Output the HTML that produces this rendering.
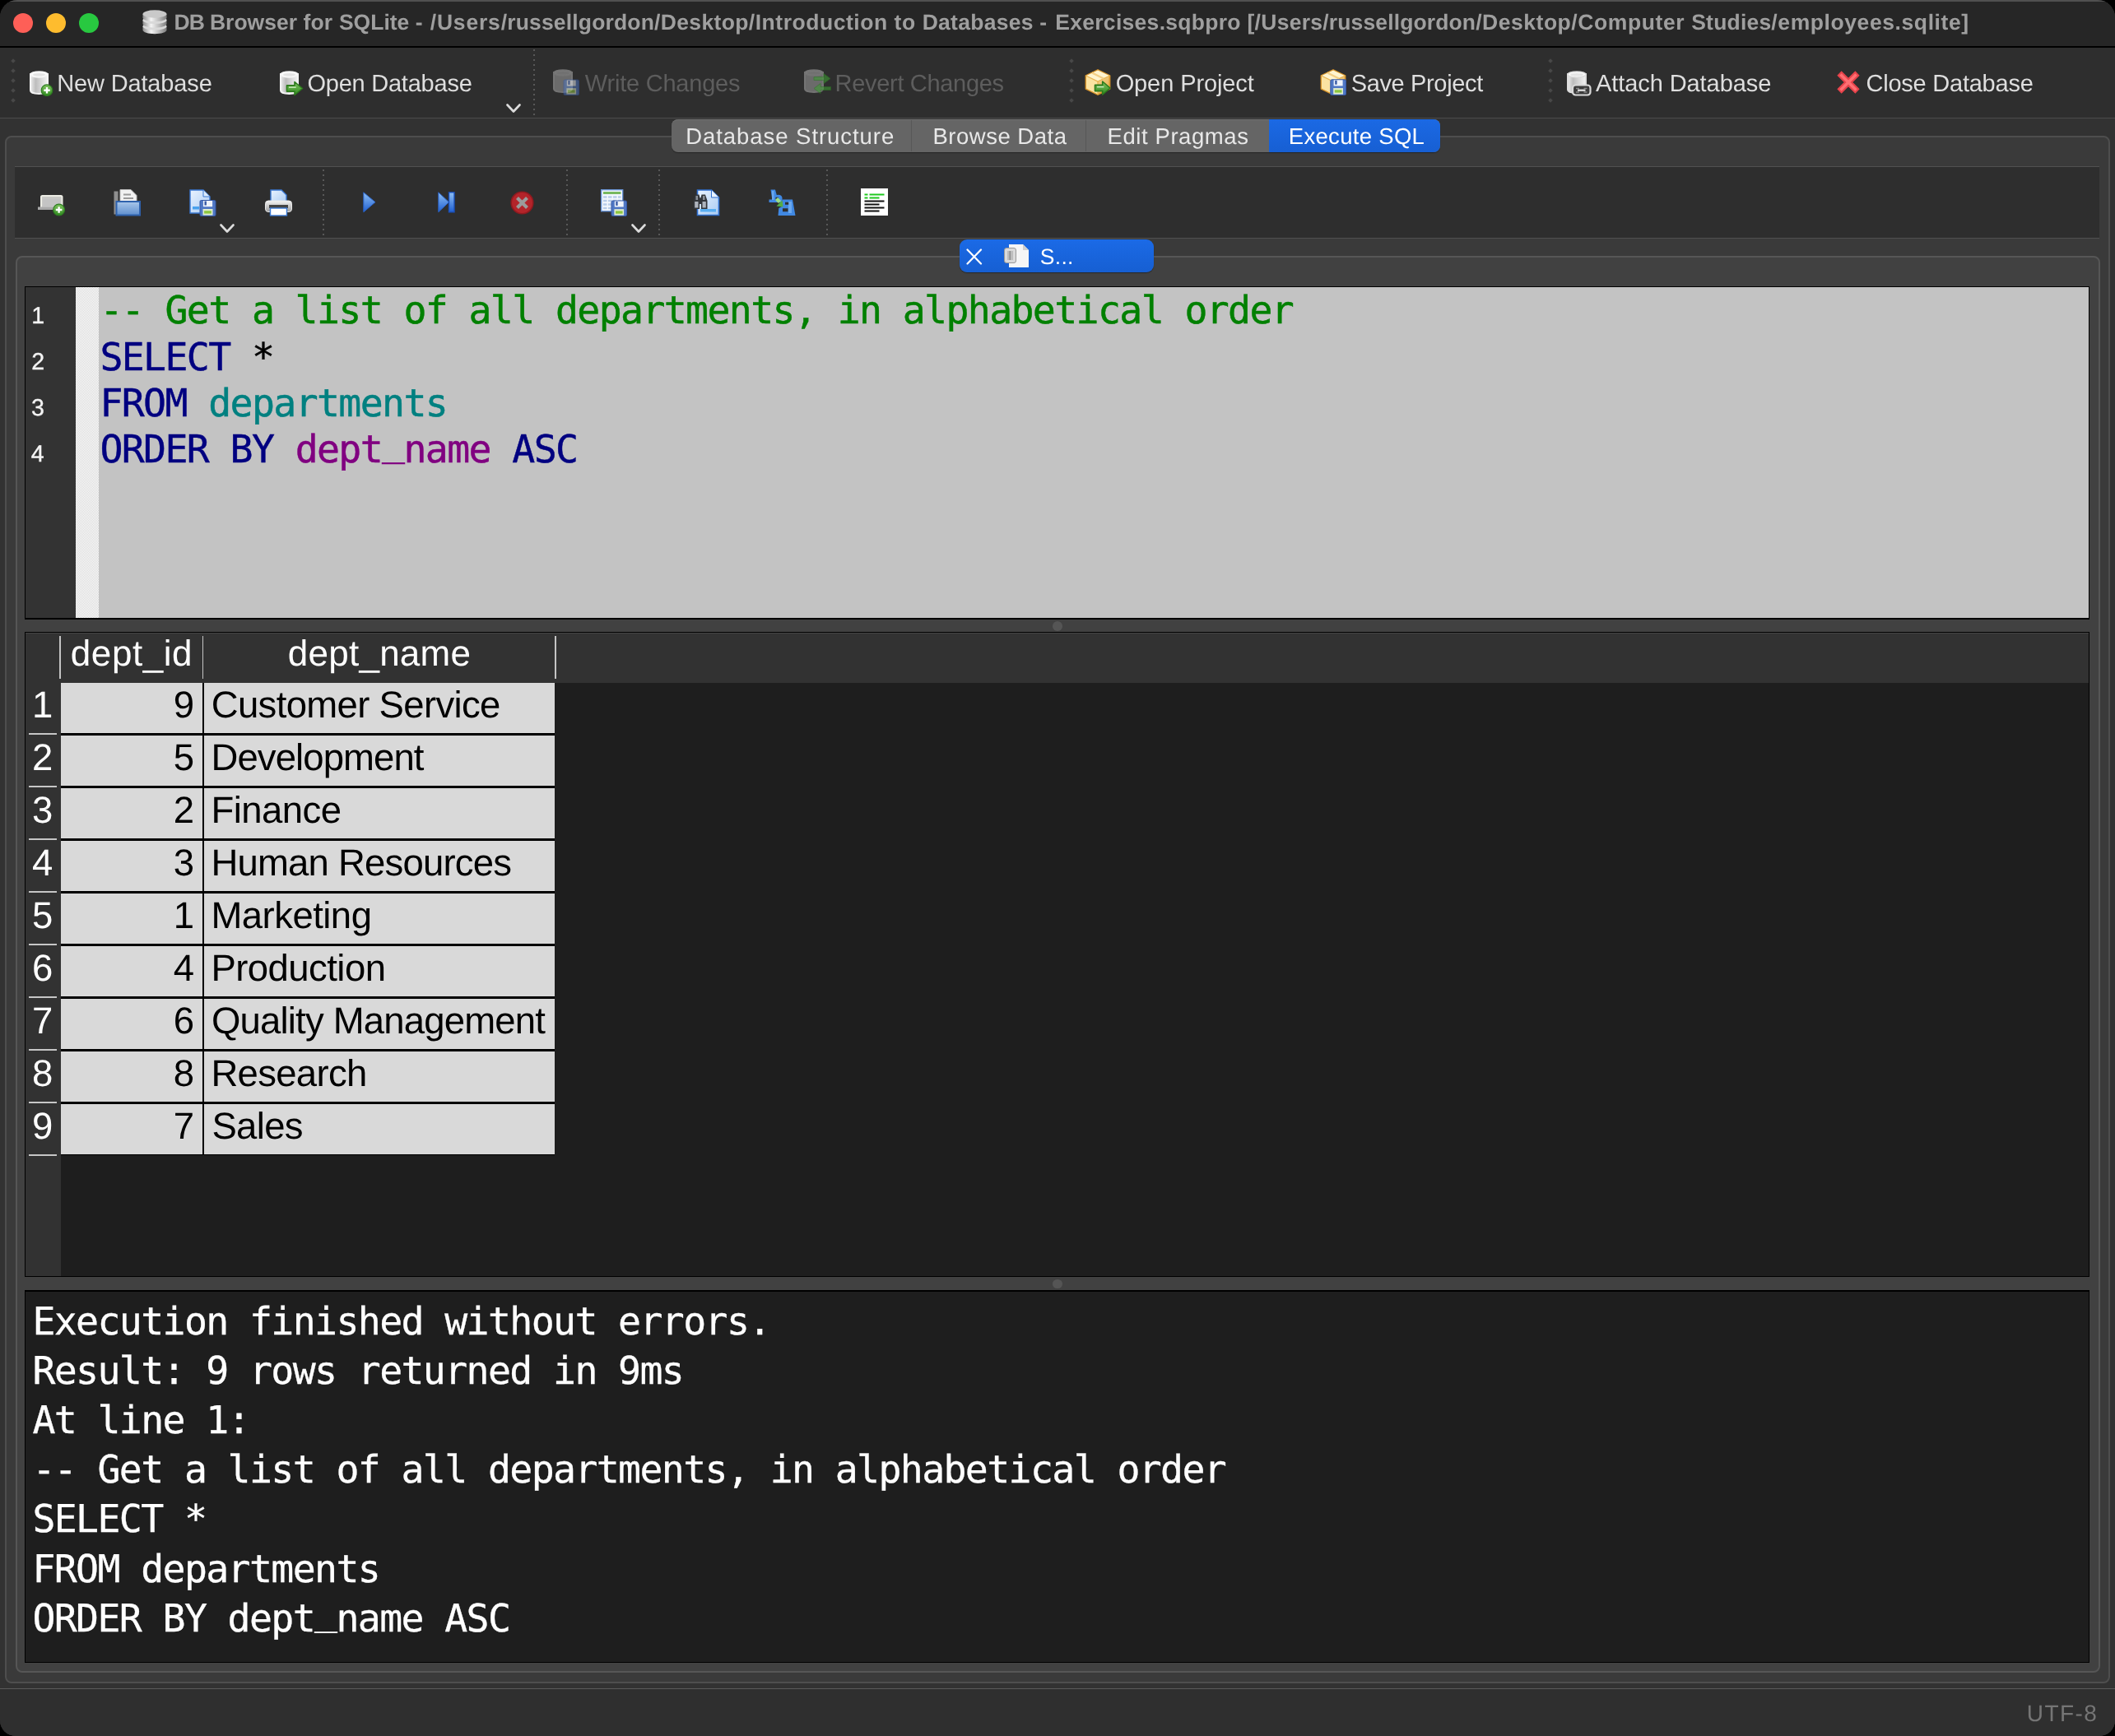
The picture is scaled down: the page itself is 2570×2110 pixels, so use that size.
<!DOCTYPE html>
<html><head><meta charset="utf-8"><title>DB Browser for SQLite</title>
<style>
html,body{margin:0;padding:0;background:#000;}
body{width:2570px;height:2110px;position:relative;overflow:hidden;}
.a{position:absolute;display:block}
.ic{filter:blur(.55px)}
.t{position:absolute;white-space:nowrap;font-kerning:none;margin:0;text-rendering:geometricPrecision}
</style></head><body>
<div class="a" id="win" style="left:0;top:0;width:2570px;height:2110px;background:#323232;border-radius:21px 21px 19px 19px;overflow:hidden;will-change:transform">
<div class="a" style="left:0px;top:0px;width:2570.00px;height:56.50px;background:#262626;"></div>
<div class="a" style="left:0px;top:0px;width:2570.00px;height:1.50px;background:#505050;"></div>
<div class="a" style="left:0px;top:56px;width:2570.00px;height:1.50px;background:#000;"></div>
<div class="a" style="left:15.8px;top:15.8px;width:24.4px;height:24.4px;border-radius:50%;background:#fe5f57"></div>
<div class="a" style="left:55.8px;top:15.8px;width:24.4px;height:24.4px;border-radius:50%;background:#febc2e"></div>
<div class="a" style="left:95.8px;top:15.8px;width:24.4px;height:24.4px;border-radius:50%;background:#28c840"></div>
<svg class="a" style="left:172px;top:11px" width="32" height="31" viewBox="0 0 32 31">
<defs><linearGradient id="sil" x1="0" x2="1"><stop offset="0" stop-color="#8e8e8e"/><stop offset=".35" stop-color="#f4f4f4"/><stop offset=".7" stop-color="#b8b8b8"/><stop offset="1" stop-color="#7c7c7c"/></linearGradient></defs>
<g>
<path d="M1.5 21v4.5c0 2.6 6.5 4.7 14.5 4.7s14.500-2.100 14.500-4.700V21z" fill="url(#sil)"/>
<ellipse cx="16" cy="21" rx="14.500" ry="4.600" fill="#d9d9d9"/>
<path d="M1.5 13.500v4.500c0 2.600 6.500 4.700 14.500 4.700s14.500-2.100 14.500-4.700v-4.500z" fill="url(#sil)"/>
<ellipse cx="16" cy="13.500" rx="14.500" ry="4.600" fill="#d9d9d9"/>
<path d="M1.5 6v4.500c0 2.600 6.500 4.700 14.500 4.700s14.500-2.100 14.500-4.700V6z" fill="url(#sil)"/>
<ellipse cx="16" cy="6" rx="14.500" ry="4.700" fill="#c9c9c9"/>
</g></svg>
<div class="t" style="left:211.43px;top:10.01px;font:26.5px/34px 'Liberation Sans', sans-serif;font-weight:bold;letter-spacing:0.000px;color:#9f9f9f;white-space:pre;"><span style="letter-spacing:-0.712px">DB </span><span style="letter-spacing:0.012px">Browser </span><span style="letter-spacing:0.203px">for </span><span style="letter-spacing:-0.009px">SQLite </span><span style="letter-spacing:0.956px">- </span><span style="letter-spacing:0.812px">/Users</span><span style="letter-spacing:0.168px">/russellgordon</span><span style="letter-spacing:0.348px">/Desktop</span><span style="letter-spacing:0.538px">/Introduction </span><span style="letter-spacing:0.575px">to </span><span style="letter-spacing:0.266px">Databases </span><span style="letter-spacing:1.356px">- </span><span style="letter-spacing:0.294px">Exercises.sqbpro </span><span style="letter-spacing:0.278px">[/Users</span><span style="letter-spacing:0.125px">/russellgordon</span><span style="letter-spacing:0.536px">/Desktop</span><span style="letter-spacing:0.604px">/Computer </span><span style="letter-spacing:0.198px">Studies</span><span style="letter-spacing:0.588px">/employees.sqlite]</span></div>
<div class="a" style="left:0px;top:57.5px;width:2570.00px;height:85.70px;background:#2e2e2e;"></div>
<div class="a" style="left:0px;top:143px;width:2570.00px;height:1.30px;background:#4c4c4c;"></div>
<div class="a" style="left:14px;top:72px;width:4px;height:4px;background:#484848;transform:rotate(45deg)"></div>
<div class="a" style="left:14px;top:84px;width:4px;height:4px;background:#484848;transform:rotate(45deg)"></div>
<div class="a" style="left:14px;top:96px;width:4px;height:4px;background:#484848;transform:rotate(45deg)"></div>
<div class="a" style="left:14px;top:108px;width:4px;height:4px;background:#484848;transform:rotate(45deg)"></div>
<div class="a" style="left:14px;top:120px;width:4px;height:4px;background:#484848;transform:rotate(45deg)"></div>
<div class="a" style="left:1300px;top:72px;width:4px;height:4px;background:#484848;transform:rotate(45deg)"></div>
<div class="a" style="left:1300px;top:84px;width:4px;height:4px;background:#484848;transform:rotate(45deg)"></div>
<div class="a" style="left:1300px;top:96px;width:4px;height:4px;background:#484848;transform:rotate(45deg)"></div>
<div class="a" style="left:1300px;top:108px;width:4px;height:4px;background:#484848;transform:rotate(45deg)"></div>
<div class="a" style="left:1300px;top:120px;width:4px;height:4px;background:#484848;transform:rotate(45deg)"></div>
<div class="a" style="left:1882px;top:72px;width:4px;height:4px;background:#484848;transform:rotate(45deg)"></div>
<div class="a" style="left:1882px;top:84px;width:4px;height:4px;background:#484848;transform:rotate(45deg)"></div>
<div class="a" style="left:1882px;top:96px;width:4px;height:4px;background:#484848;transform:rotate(45deg)"></div>
<div class="a" style="left:1882px;top:108px;width:4px;height:4px;background:#484848;transform:rotate(45deg)"></div>
<div class="a" style="left:1882px;top:120px;width:4px;height:4px;background:#484848;transform:rotate(45deg)"></div>
<div class="a" style="left:648px;top:60px;width:2px;height:80px;background:repeating-linear-gradient(to bottom,#585858 0 2px,transparent 2px 6px)"></div>
<div class="t" style="left:69.22px;top:83.05px;font:29px/38px 'Liberation Sans', sans-serif;letter-spacing:-0.150px;color:#dedede;white-space:nowrap;">New Database</div>
<div class="t" style="left:373.43px;top:83.05px;font:29px/38px 'Liberation Sans', sans-serif;letter-spacing:-0.232px;color:#dedede;white-space:nowrap;">Open Database</div>
<div class="t" style="left:710.87px;top:83.05px;font:29px/38px 'Liberation Sans', sans-serif;letter-spacing:-0.219px;color:#5d5d5d;white-space:nowrap;">Write Changes</div>
<div class="t" style="left:1014.62px;top:83.05px;font:29px/38px 'Liberation Sans', sans-serif;letter-spacing:-0.318px;color:#5d5d5d;white-space:nowrap;">Revert Changes</div>
<div class="t" style="left:1355.63px;top:83.05px;font:29px/38px 'Liberation Sans', sans-serif;letter-spacing:-0.097px;color:#dedede;white-space:nowrap;">Open Project</div>
<div class="t" style="left:1641.68px;top:83.05px;font:29px/38px 'Liberation Sans', sans-serif;letter-spacing:-0.353px;color:#dedede;white-space:nowrap;">Save Project</div>
<div class="t" style="left:1938.94px;top:83.05px;font:29px/38px 'Liberation Sans', sans-serif;letter-spacing:-0.076px;color:#dedede;white-space:nowrap;">Attach Database</div>
<div class="t" style="left:2267.53px;top:83.05px;font:29px/38px 'Liberation Sans', sans-serif;letter-spacing:-0.237px;color:#dedede;white-space:nowrap;">Close Database</div>
<svg class="a" width="0" height="0" style="left:0;top:0"><defs>
<linearGradient id="cyl" x1="0" x2="1"><stop offset="0" stop-color="#ececec"/><stop offset=".3" stop-color="#bdbdbd"/><stop offset=".6" stop-color="#d6d6d6"/><stop offset="1" stop-color="#f4f4f4"/></linearGradient>
<linearGradient id="cyld" x1="0" x2="1"><stop offset="0" stop-color="#5c5c5c"/><stop offset=".4" stop-color="#7b7b7b"/><stop offset="1" stop-color="#565656"/></linearGradient>
<linearGradient id="grn" x1="0" y1="0" x2="0" y2="1"><stop offset="0" stop-color="#7fc35f"/><stop offset="1" stop-color="#2f8a1f"/></linearGradient>
<linearGradient id="blu" x1="0" y1="0" x2="0" y2="1"><stop offset="0" stop-color="#8fc0f5"/><stop offset="1" stop-color="#1f5fd0"/></linearGradient>
<linearGradient id="page" x1="0" y1="0" x2="1" y2="1"><stop offset="0" stop-color="#eaf3ff"/><stop offset="1" stop-color="#a9cbf3"/></linearGradient>
<linearGradient id="box" x1="0" y1="0" x2="1" y2="1"><stop offset="0" stop-color="#fff3c4"/><stop offset="1" stop-color="#e2a640"/></linearGradient>
<linearGradient id="fold" x1="0" y1="0" x2="0" y2="1"><stop offset="0" stop-color="#a9c7ea"/><stop offset="1" stop-color="#5f8fce"/></linearGradient>
<linearGradient id="gray" x1="0" y1="0" x2="0" y2="1"><stop offset="0" stop-color="#f4f4f4"/><stop offset="1" stop-color="#9d9d9d"/></linearGradient>
</defs></svg>
<svg class="a ic" style="left:36px;top:85.5px;" width="29" height="31" viewBox="0 0 29 31"><g opacity="1"><path d="M1 4v20c0 5.2 21 5.2 21 0v-20z" fill="url(#cyl)" stroke="#f4f4f4" stroke-width="2"/><ellipse cx="11.5" cy="4.5" rx="10.5" ry="3.5" fill="#fbfbfb" stroke="#f4f4f4" stroke-width="1.500"/><ellipse cx="11.5" cy="4.8" rx="7.5" ry="1.7999999999999998" fill="#d2d2d2" opacity=".55"/></g><circle cx="21" cy="23.7" r="6.8" fill="url(#grn)" stroke="#2f7d22" stroke-width="1.200"/><path d="M17.3 23.7H24.7M21 20.0V27.4" stroke="#fff" stroke-width="2.400"/></svg>
<svg class="a ic" style="left:340px;top:85.5px;" width="29" height="31" viewBox="0 0 29 31"><g opacity="1"><path d="M1 4v20c0 5.2 21 5.2 21 0v-20z" fill="url(#cyl)" stroke="#f4f4f4" stroke-width="2"/><ellipse cx="11.5" cy="4.5" rx="10.5" ry="3.5" fill="#fbfbfb" stroke="#f4f4f4" stroke-width="1.500"/><ellipse cx="11.5" cy="4.8" rx="7.5" ry="1.7999999999999998" fill="#d2d2d2" opacity=".55"/></g><g transform="translate(7.5,12.5)" opacity="1"><path d="M1 5.4H10.5V1L20 9.0 10.5 17V12.6H1z" fill="url(#grn)" stroke="#2c7a1c" stroke-width="1.6" stroke-linejoin="round"/><path d="M3.500 7.6H12.2" stroke="#c5e8b4" stroke-width="1.600"/></g></svg>
<svg class="a ic" style="left:672px;top:83.5px;" width="32.5" height="33" viewBox="0 0 32.5 33"><g opacity="1"><path d="M1 4v20c0 5.2 22 5.2 22 0v-20z" fill="#6b6b6b" stroke="#747474" stroke-width="2"/><ellipse cx="12.0" cy="4.5" rx="11.0" ry="3.5" fill="#787878" stroke="#747474" stroke-width="1.500"/><ellipse cx="12.0" cy="4.8" rx="8.0" ry="1.7999999999999998" fill="#6b6b6b" opacity=".55"/></g><g transform="translate(12.5,12.5)" opacity="0.5"><rect x=".5" y=".5" width="18.5" height="18.5" rx="1.500" fill="#4f77c4" stroke="#3558a5"/><rect x="4.3" y="1" width="10.9" height="7.0" fill="#eef3fb"/><rect x="5.8" y="1.500" width="2.3" height="4.9" fill="#3558a5"/><rect x="3.9" y="10.7" width="11.7" height="7.4" fill="#dfeccd"/><rect x="5.5" y="12.9" width="8.6" height="3.3" fill="#8cc63f"/></g></svg>
<svg class="a ic" style="left:977px;top:83.5px;" width="34" height="33" viewBox="0 0 34 33"><g opacity="1"><path d="M1 4v20c0 5.2 22 5.2 22 0v-20z" fill="#6b6b6b" stroke="#747474" stroke-width="2"/><ellipse cx="12.0" cy="4.5" rx="11.0" ry="3.5" fill="#787878" stroke="#747474" stroke-width="1.500"/><ellipse cx="12.0" cy="4.8" rx="8.0" ry="1.7999999999999998" fill="#6b6b6b" opacity=".55"/></g><g opacity=".6" fill="#3f9a35" stroke="#2d7a25" stroke-width="1"><path d="M12 9.500h12V5.500l8 6-8 6V13.500H12z"/><path d="M32.500 21.500H20v-4l-8 6 8 6V25.500h12.500z"/></g></svg>
<svg class="a ic" style="left:1318px;top:83.8px;" width="33" height="33" viewBox="0 0 33 33"><g opacity="1"><path d="M16 1 30.500 8V24L16 31 1.500 24V8z" fill="url(#box)" stroke="#d9962c" stroke-width="1.800" stroke-linejoin="round"/><path d="M16 1.500 30 8 16 15 2 8z" fill="#fff4cf"/><path d="M2 8.500 16 15.500V30.500L2 23.500z" fill="#fbe3a2"/><path d="M1.500 8 16 15 30.500 8M16 15V31" fill="none" stroke="#e9b552" stroke-width="1.300"/><path d="M9 4.500 23 11.500" stroke="#f3cf86" stroke-width="2.500"/></g><g transform="translate(11.5,14)" opacity="1"><path d="M1 5.4H10.2V1L19.5 9.0 10.2 17V12.6H1z" fill="url(#grn)" stroke="#2c7a1c" stroke-width="1.6" stroke-linejoin="round"/><path d="M3.500 7.6H11.9" stroke="#c5e8b4" stroke-width="1.600"/></g></svg>
<svg class="a ic" style="left:1604px;top:83.8px;" width="33" height="33" viewBox="0 0 33 33"><g opacity="1"><path d="M16 1 30.500 8V24L16 31 1.500 24V8z" fill="url(#box)" stroke="#d9962c" stroke-width="1.800" stroke-linejoin="round"/><path d="M16 1.500 30 8 16 15 2 8z" fill="#fff4cf"/><path d="M2 8.500 16 15.500V30.500L2 23.500z" fill="#fbe3a2"/><path d="M1.500 8 16 15 30.500 8M16 15V31" fill="none" stroke="#e9b552" stroke-width="1.300"/><path d="M9 4.500 23 11.500" stroke="#f3cf86" stroke-width="2.500"/></g><g transform="translate(12.3,12.3)" opacity="1"><rect x=".5" y=".5" width="18.7" height="18.7" rx="1.500" fill="#4f77c4" stroke="#3558a5"/><rect x="4.3" y="1" width="11.0" height="7.1" fill="#eef3fb"/><rect x="5.9" y="1.500" width="2.4" height="4.9" fill="#3558a5"/><rect x="3.9" y="10.8" width="11.8" height="7.5" fill="#dfeccd"/><rect x="5.5" y="13.0" width="8.7" height="3.3" fill="#8cc63f"/></g></svg>
<svg class="a ic" style="left:1903.5px;top:85.5px;" width="30" height="31" viewBox="0 0 30 31"><g opacity="1"><path d="M1 4v19c0 5.2 22 5.2 22 0v-19z" fill="url(#cyl)" stroke="#dcdcdc" stroke-width="2"/><ellipse cx="12.0" cy="4.5" rx="11.0" ry="3.5" fill="#fbfbfb" stroke="#dcdcdc" stroke-width="1.500"/><ellipse cx="12.0" cy="4.8" rx="8.0" ry="1.7999999999999998" fill="#d2d2d2" opacity=".55"/></g><rect x="7" y="17.500" width="21.500" height="12" rx="3.500" fill="#3b3b3b" stroke="#d8d8d8" stroke-width="2.200"/><path d="M11 21.500h4M20.500 21.500h4M11 26h4M20.500 26h4" stroke="#8a8a8a" stroke-width="1.500"/><path d="M13 23.700h9.500" stroke="#e4e4e4" stroke-width="2.200"/></svg>
<svg class="a ic" style="left:2232px;top:86px;" width="28" height="28" viewBox="0 0 28 28"><path d="M3 3 25 25M25 3 3 25" stroke="#e8434b" stroke-width="7.500" stroke-linecap="butt"/><path d="M4.500 4.500 23.500 23.500M23.500 4.500 4.500 23.500" stroke="#ff6f73" stroke-width="3.500" stroke-linecap="butt"/></svg>
<svg class="a" style="left:615px;top:126px" width="18" height="12" viewBox="0 0 18 12"><path d="M1.5 1.500 9 9.500 16.500 1.500" fill="none" stroke="#dcdcdc" stroke-width="2.6" stroke-linecap="round" stroke-linejoin="round"/></svg>
<div class="a" style="left:6px;top:164.5px;width:2557.5px;height:1881.5px;background:#3a3a3a;border:2px solid #4e4e4e;border-radius:8px;box-sizing:border-box"></div>
<div class="a" style="left:815.5px;top:144.5px;width:934.5px;height:40.3px;background:#656565;border-radius:8px;box-shadow:inset 0 1px 0 #707070, 0 1px 1px rgba(0,0,0,.35)"></div>
<div class="a" style="left:1542px;top:144.5px;width:208px;height:40.3px;background:linear-gradient(#1b69e4,#175fd3);border-radius:0 8px 8px 0"></div>
<div class="a" style="left:1107.2px;top:146px;width:1.30px;height:38.00px;background:#575757;"></div>
<div class="a" style="left:1319.2px;top:146px;width:1.30px;height:38.00px;background:#575757;"></div>
<div class="t" style="left:833.24px;top:148.37px;font:27.5px/36px 'Liberation Sans', sans-serif;letter-spacing:0.944px;color:#e8e8e8;white-space:nowrap;">Database Structure</div>
<div class="t" style="left:1133.44px;top:148.37px;font:27.5px/36px 'Liberation Sans', sans-serif;letter-spacing:0.513px;color:#e8e8e8;white-space:nowrap;">Browse Data</div>
<div class="t" style="left:1345.54px;top:148.37px;font:27.5px/36px 'Liberation Sans', sans-serif;letter-spacing:0.580px;color:#e8e8e8;white-space:nowrap;">Edit Pragmas</div>
<div class="t" style="left:1565.74px;top:148.37px;font:27.5px/36px 'Liberation Sans', sans-serif;letter-spacing:0.314px;color:#ffffff;white-space:nowrap;">Execute SQL</div>
<div class="a" style="left:18px;top:202px;width:2533.00px;height:87.80px;background:#2e2e2e;"></div>
<div class="a" style="left:18px;top:202px;width:2533.00px;height:1.30px;background:#505050;"></div>
<div class="a" style="left:18px;top:288.7px;width:2533.00px;height:1.30px;background:#505050;"></div>
<div class="a" style="left:392px;top:206px;width:2px;height:80px;background:repeating-linear-gradient(to bottom,#585858 0 2px,transparent 2px 6px)"></div>
<div class="a" style="left:688px;top:206px;width:2px;height:80px;background:repeating-linear-gradient(to bottom,#585858 0 2px,transparent 2px 6px)"></div>
<div class="a" style="left:800px;top:206px;width:2px;height:80px;background:repeating-linear-gradient(to bottom,#585858 0 2px,transparent 2px 6px)"></div>
<div class="a" style="left:1004px;top:206px;width:2px;height:80px;background:repeating-linear-gradient(to bottom,#585858 0 2px,transparent 2px 6px)"></div>
<svg class="a" style="left:267px;top:272px" width="18" height="12" viewBox="0 0 18 12"><path d="M1.5 1.500 9 9.500 16.500 1.500" fill="none" stroke="#dcdcdc" stroke-width="2.6" stroke-linecap="round" stroke-linejoin="round"/></svg>
<svg class="a" style="left:767px;top:272px" width="18" height="12" viewBox="0 0 18 12"><path d="M1.5 1.500 9 9.500 16.500 1.500" fill="none" stroke="#dcdcdc" stroke-width="2.6" stroke-linecap="round" stroke-linejoin="round"/></svg>
<svg class="a ic" style="left:45.5px;top:237px;" width="33" height="26" viewBox="0 0 33 26"><path d="M0.500 16.500H4V2.500q0-1.500 1.500-1.500H28q1.500 0 1.500 1.500V16.500" fill="#c9c9c6" stroke="#ecece4" stroke-width="2"/><rect x="0" y="14.500" width="27" height="3.500" fill="#a9a9a9"/><rect x="6" y="4.500" width="21" height="10" fill="#c4c4c4"/><circle cx="25.6" cy="18" r="6.9" fill="url(#grn)" stroke="#2f7d22" stroke-width="1.200"/><path d="M21.8 18H29.4M25.6 14.2V21.8" stroke="#fff" stroke-width="2.400"/></svg>
<svg class="a ic" style="left:138px;top:229.5px;" width="33" height="33" viewBox="0 0 33 33"><rect x="0.500" y="2.500" width="5" height="28" fill="#8f8f8f"/><path d="M8 .5h13l7 7v16H8z" fill="#f1f1f1" stroke="#bdbdbd"/><path d="M12 6.500h9M12 11h12" stroke="#9a9a9a" stroke-width="2"/><rect x="3.500" y="15" width="28.500" height="16.500" fill="url(#fold)" stroke="#2f62ad" stroke-width="2"/></svg>
<svg class="a ic" style="left:230px;top:229.5px;" width="33" height="33" viewBox="0 0 33 33"><path d="M1 1h16l8 8v20H1z" fill="url(#page)" stroke="#3a78d2" stroke-width="1.400"/><path d="M17 1v8h8" fill="#dcebfb" stroke="#3a78d2" stroke-width="1"/><rect x="4" y="21" width="8" height="3.500" fill="#49a2ee"/><g transform="translate(12.5,13)" opacity="1"><rect x=".5" y=".5" width="19" height="19" rx="1.500" fill="#4f77c4" stroke="#3558a5"/><rect x="4.4" y="1" width="11.2" height="7.2" fill="#eef3fb"/><rect x="6.0" y="1.500" width="2.4" height="5.0" fill="#3558a5"/><rect x="4.0" y="11.0" width="12.0" height="7.6" fill="#dfeccd"/><rect x="5.6" y="13.2" width="8.8" height="3.4" fill="#8cc63f"/></g></svg>
<svg class="a ic" style="left:321.5px;top:229.5px;" width="33" height="33" viewBox="0 0 33 33"><path d="M7 1h13l6 6v10H7z" fill="url(#page)" stroke="#3a78d2" stroke-width="1.400"/><rect x=".5" y="14" width="32" height="13.500" rx="3.500" fill="url(#gray)" stroke="#e9e9e9"/><rect x="5" y="19" width="23" height="4" fill="#444"/><rect x="6.500" y="23" width="20" height="9" fill="#fff" stroke="#3a78d2" stroke-width="1.400"/></svg>
<svg class="a ic" style="left:441px;top:233px;" width="16" height="26" viewBox="0 0 16 26"><path d="M.8 .8 15 12.700.8 24.700z" fill="url(#blu)" stroke="#2a63c9" stroke-width="1"/></svg>
<svg class="a ic" style="left:531.5px;top:233px;" width="21" height="26" viewBox="0 0 21 26"><path d="M.8 .8 13.500 12.700.8 24.700z" fill="url(#blu)" stroke="#2a63c9" stroke-width="1"/><rect x="13.500" y=".8" width="6.500" height="24" fill="url(#blu)" stroke="#1b50bb" stroke-width="1.400"/></svg>
<svg class="a ic" style="left:619.5px;top:231.5px;" width="29" height="29" viewBox="0 0 29 29"><circle cx="14.500" cy="14.500" r="13.300" fill="#b3242a" stroke="#8f1a1f" stroke-width="1.600"/><path d="M8.500 8.500 20.500 20.500M20.500 8.500 8.500 20.500" stroke="#9b9b9b" stroke-width="4.200"/></svg>
<svg class="a ic" style="left:730px;top:229.5px;" width="33" height="33" viewBox="0 0 33 33"><rect x=".7" y=".7" width="26" height="26" fill="#f3f7fd" stroke="#6a95d6" stroke-width="1.400"/><rect x="3" y="3" width="21.500" height="3" fill="#78b860"/><path d="M3 9.500h21.500M3 14h21.500M3 18.500h21.500M3 23h21.500" stroke="#b9cdea" stroke-width="2.500" stroke-dasharray="4.500 1.500"/><g transform="translate(12.5,13.5)" opacity="1"><rect x=".5" y=".5" width="18.5" height="18.5" rx="1.500" fill="#4f77c4" stroke="#3558a5"/><rect x="4.3" y="1" width="10.9" height="7.0" fill="#eef3fb"/><rect x="5.8" y="1.500" width="2.3" height="4.9" fill="#3558a5"/><rect x="3.9" y="10.7" width="11.7" height="7.4" fill="#dfeccd"/><rect x="5.5" y="12.9" width="8.6" height="3.3" fill="#8cc63f"/></g></svg>
<svg class="a ic" style="left:842px;top:229.5px;" width="33" height="33" viewBox="0 0 33 33"><path d="M5.500 1h17l9 9v21.500H5.500z" fill="url(#page)" stroke="#2f6fd0" stroke-width="1.600"/><path d="M22.500 1v9h9" fill="#eaf3ff" stroke="#2f6fd0" stroke-width="1"/><rect x="9" y="24" width="19" height="3.500" fill="#58aef3"/><g fill="#33363b"><path d="M0.500 14l2.500-7.500h4.500l1 4h1l1-4h4.500l2.500 7.500v10H10V18H8v6H0.500z"/></g><g fill="#aeb4bd"><rect x="2.200" y="15" width="4.300" height="7.500"/><rect x="11.500" y="15" width="4.300" height="7.500"/><rect x="3.500" y="8" width="2.500" height="5" opacity=".7"/><rect x="12" y="8" width="2.500" height="5" opacity=".7"/></g></svg>
<svg class="a ic" style="left:934px;top:229.5px;" width="33" height="33" viewBox="0 0 33 33"><g fill="#4088e2" fill-rule="evenodd"><path d="M2.500 0.500h5.500l1.800 6.500q6-1 6.700 3.500v5.500H0.500v-3.500h3.800zM8.500 9.800v3.400h3.500v-3.400z"/><path d="M16.500 12.500h12.500l3.500 19.500h-21l.8-9 3.700-2zM20 15.800v3h5v-3zM17 23.300v4h6.500v-4z"/></g><g fill="#7db6f4" opacity=".7"><rect x="4" y="2" width="2.500" height="11"/><rect x="24" y="15" width="4" height="14"/></g><path d="M9.500 11.500 13.500 15.500" stroke="#9cdc88" stroke-width="4.500"/><path d="M9.500 20.500 17.500 21.500 16.500 13.500z" fill="#55ad44"/></svg>
<svg class="a ic" style="left:1045.5px;top:229.3px;filter:none;" width="33" height="33" viewBox="0 0 33 33"><rect width="33" height="33" fill="#fff"/><path d="M4.500 7.500h4M10.500 7.500h18M4.500 11.500h4M10.500 11.500h12" stroke="#1ec81e" stroke-width="1.800"/><path d="M4.500 15.500h24M4.500 19.500h18M4.500 23.500h24M4.500 27.500h18" stroke="#111" stroke-width="1.800"/></svg>
<div class="a" style="left:18.5px;top:310.7px;width:2533px;height:1722.5px;background:#414141;border:2px solid #565656;border-radius:8px;box-sizing:border-box"></div>
<div class="a" style="left:1165.8px;top:291px;width:236.2px;height:40px;background:linear-gradient(#1b6ae6,#165fd2);border-radius:9px;box-shadow:0 1px 1px rgba(0,0,0,.4)"></div>
<svg class="a" style="left:1174px;top:302px" width="20" height="20" viewBox="0 0 20 20"><path d="M1.500 1.500 18 18.500M18 1.500 1.500 18.500" stroke="#fff" stroke-width="2.2" fill="none" stroke-linecap="round"/></svg>
<svg class="a" style="left:1220px;top:295.500px" width="31" height="30" viewBox="0 0 31 30">
<path d="M6 1h17l7 7v21H6z" fill="#f6f6f6"/><path d="M23 1v7h7z" fill="#cfcfcf"/>
<rect x="0.500" y="5.500" width="14" height="18" rx="2.500" fill="#dadada" stroke="#9a9a9a"/>
<rect x="4" y="9" width="7" height="11" fill="#bdbdbd"/><rect x="6.500" y="9" width="1.500" height="11" fill="#8d8d8d"/></svg>
<div class="t" style="left:1263.80px;top:295.41px;font:26.5px/34px 'Liberation Sans', sans-serif;letter-spacing:0.287px;color:#fff;white-space:nowrap;">S...</div>
<div class="a" style="left:30px;top:348px;width:2509.00px;height:404.80px;background:#000;"></div>
<div class="a" style="left:31.3px;top:349.3px;width:2506.40px;height:402.20px;background:#c3c3c3;"></div>
<div class="a" style="left:31.3px;top:349.3px;width:60.70px;height:402.20px;background:#333333;"></div>
<div class="a" style="left:92px;top:349.300px;width:28px;height:402.200px;background:repeating-conic-gradient(#ffffff 0 25%,#d6d6d6 0 50%) 0 0/2px 2px"></div>
<div class="t" style="left:38.19px;top:366.18px;font:28.6px/37px 'Liberation Sans', sans-serif;letter-spacing:0.000px;color:#f4f4f4;-webkit-text-stroke:.35px;">1</div>
<div class="t" style="left:38.23px;top:422.28px;font:28.6px/37px 'Liberation Sans', sans-serif;letter-spacing:0.000px;color:#f4f4f4;-webkit-text-stroke:.35px;">2</div>
<div class="t" style="left:38.05px;top:478.38px;font:28.6px/37px 'Liberation Sans', sans-serif;letter-spacing:0.000px;color:#f4f4f4;-webkit-text-stroke:.35px;">3</div>
<div class="t" style="left:37.63px;top:534.48px;font:28.6px/37px 'Liberation Sans', sans-serif;letter-spacing:0.000px;color:#f4f4f4;-webkit-text-stroke:.35px;">4</div>
<div class="t" style="left:121.38px;top:347.40px;font:46.5px/60px 'DejaVu Sans Mono', 'Liberation Mono', monospace;letter-spacing:-1.635px;color:#000;white-space:pre;-webkit-text-stroke:.45px;"><span style="color:#008000">-- Get a list of all departments, in alphabetical order</span></div>
<div class="t" style="left:121.38px;top:403.50px;font:46.5px/60px 'DejaVu Sans Mono', 'Liberation Mono', monospace;letter-spacing:-1.635px;color:#000;white-space:pre;-webkit-text-stroke:.45px;"><span style="color:#000080">SELECT</span> <span style="color:#000">*</span></div>
<div class="t" style="left:121.38px;top:459.60px;font:46.5px/60px 'DejaVu Sans Mono', 'Liberation Mono', monospace;letter-spacing:-1.635px;color:#000;white-space:pre;-webkit-text-stroke:.45px;"><span style="color:#000080">FROM</span> <span style="color:#008080">departments</span></div>
<div class="t" style="left:121.38px;top:515.70px;font:46.5px/60px 'DejaVu Sans Mono', 'Liberation Mono', monospace;letter-spacing:-1.635px;color:#000;white-space:pre;-webkit-text-stroke:.45px;"><span style="color:#000080">ORDER BY</span> <span style="color:#800080">dept<span style="position:relative;top:-9px">_</span>name</span> <span style="color:#000080">ASC</span></div>
<div class="a" style="left:1279.100px;top:755.100px;width:11.800px;height:11.800px;border-radius:50%;background:#555"></div>
<div class="a" style="left:30px;top:767.8px;width:2509.00px;height:784.50px;background:#000;"></div>
<div class="a" style="left:31.3px;top:769px;width:2506.40px;height:782.00px;background:#1e1e1e;"></div>
<div class="a" style="left:31.3px;top:769px;width:2506.40px;height:60.70px;background:#323232;"></div>
<div class="a" style="left:31.3px;top:769px;width:2506.40px;height:1.00px;background:#444;"></div>
<div class="a" style="left:31.3px;top:829.7px;width:42.50px;height:721.30px;background:#323232;"></div>
<div class="a" style="left:72.2px;top:773px;width:1.60px;height:52.00px;background:#c4c4c4;"></div>
<div class="a" style="left:245.79999999999998px;top:773px;width:1.60px;height:52.00px;background:#c4c4c4;"></div>
<div class="a" style="left:674.2px;top:773px;width:1.60px;height:52.00px;background:#c4c4c4;"></div>
<div class="t" style="left:85.85px;top:766.25px;font:44px/57px 'Liberation Sans', sans-serif;letter-spacing:0.555px;color:#fff;white-space:nowrap;">dept_id</div>
<div class="t" style="left:349.85px;top:766.25px;font:44px/57px 'Liberation Sans', sans-serif;letter-spacing:0.241px;color:#fff;white-space:nowrap;">dept_name</div>
<div class="a" style="left:73.8px;top:829.7px;width:600.20px;height:576.00px;background:#000;"></div>
<div class="a" style="left:73.8px;top:829.7px;width:172.10px;height:61.80px;background:#d9d9d9;"></div>
<div class="a" style="left:248px;top:829.7px;width:426.00px;height:61.80px;background:#d9d9d9;"></div>
<div class="a" style="left:34.8px;top:891.1px;width:34.00px;height:1.80px;background:#c6c6c6;"></div>
<div class="t" style="left:38.95px;top:827.03px;font:45.5px/59px 'Liberation Sans', sans-serif;letter-spacing:0.000px;color:#fff;">1</div>
<div class="t" style="left:210.65px;top:827.03px;font:45.5px/59px 'Liberation Sans', sans-serif;letter-spacing:0.000px;color:#000;">9</div>
<div class="t" style="left:256.79px;top:827.03px;font:45.5px/59px 'Liberation Sans', sans-serif;letter-spacing:-0.670px;color:#000;white-space:nowrap;">Customer Service</div>
<div class="a" style="left:73.8px;top:893.7px;width:172.10px;height:61.80px;background:#d9d9d9;"></div>
<div class="a" style="left:248px;top:893.7px;width:426.00px;height:61.80px;background:#d9d9d9;"></div>
<div class="a" style="left:34.8px;top:955.1px;width:34.00px;height:1.80px;background:#c6c6c6;"></div>
<div class="t" style="left:38.95px;top:891.03px;font:45.5px/59px 'Liberation Sans', sans-serif;letter-spacing:0.000px;color:#fff;">2</div>
<div class="t" style="left:210.65px;top:891.03px;font:45.5px/59px 'Liberation Sans', sans-serif;letter-spacing:0.000px;color:#000;">5</div>
<div class="t" style="left:256.47px;top:891.03px;font:45.5px/59px 'Liberation Sans', sans-serif;letter-spacing:-0.912px;color:#000;white-space:nowrap;">Development</div>
<div class="a" style="left:73.8px;top:957.7px;width:172.10px;height:61.80px;background:#d9d9d9;"></div>
<div class="a" style="left:248px;top:957.7px;width:426.00px;height:61.80px;background:#d9d9d9;"></div>
<div class="a" style="left:34.8px;top:1019.1px;width:34.00px;height:1.80px;background:#c6c6c6;"></div>
<div class="t" style="left:38.95px;top:955.03px;font:45.5px/59px 'Liberation Sans', sans-serif;letter-spacing:0.000px;color:#fff;">3</div>
<div class="t" style="left:210.65px;top:955.03px;font:45.5px/59px 'Liberation Sans', sans-serif;letter-spacing:0.000px;color:#000;">2</div>
<div class="t" style="left:256.47px;top:955.03px;font:45.5px/59px 'Liberation Sans', sans-serif;letter-spacing:-0.553px;color:#000;white-space:nowrap;">Finance</div>
<div class="a" style="left:73.8px;top:1021.7px;width:172.10px;height:61.80px;background:#d9d9d9;"></div>
<div class="a" style="left:248px;top:1021.7px;width:426.00px;height:61.80px;background:#d9d9d9;"></div>
<div class="a" style="left:34.8px;top:1083.1000000000001px;width:34.00px;height:1.80px;background:#c6c6c6;"></div>
<div class="t" style="left:38.95px;top:1019.03px;font:45.5px/59px 'Liberation Sans', sans-serif;letter-spacing:0.000px;color:#fff;">4</div>
<div class="t" style="left:210.65px;top:1019.03px;font:45.5px/59px 'Liberation Sans', sans-serif;letter-spacing:0.000px;color:#000;">3</div>
<div class="t" style="left:256.47px;top:1019.03px;font:45.5px/59px 'Liberation Sans', sans-serif;letter-spacing:-0.809px;color:#000;white-space:nowrap;">Human Resources</div>
<div class="a" style="left:73.8px;top:1085.7px;width:172.10px;height:61.80px;background:#d9d9d9;"></div>
<div class="a" style="left:248px;top:1085.7px;width:426.00px;height:61.80px;background:#d9d9d9;"></div>
<div class="a" style="left:34.8px;top:1147.1000000000001px;width:34.00px;height:1.80px;background:#c6c6c6;"></div>
<div class="t" style="left:38.95px;top:1083.03px;font:45.5px/59px 'Liberation Sans', sans-serif;letter-spacing:0.000px;color:#fff;">5</div>
<div class="t" style="left:210.65px;top:1083.03px;font:45.5px/59px 'Liberation Sans', sans-serif;letter-spacing:0.000px;color:#000;">1</div>
<div class="t" style="left:256.47px;top:1083.03px;font:45.5px/59px 'Liberation Sans', sans-serif;letter-spacing:-0.539px;color:#000;white-space:nowrap;">Marketing</div>
<div class="a" style="left:73.8px;top:1149.7px;width:172.10px;height:61.80px;background:#d9d9d9;"></div>
<div class="a" style="left:248px;top:1149.7px;width:426.00px;height:61.80px;background:#d9d9d9;"></div>
<div class="a" style="left:34.8px;top:1211.1000000000001px;width:34.00px;height:1.80px;background:#c6c6c6;"></div>
<div class="t" style="left:38.95px;top:1147.03px;font:45.5px/59px 'Liberation Sans', sans-serif;letter-spacing:0.000px;color:#fff;">6</div>
<div class="t" style="left:210.65px;top:1147.03px;font:45.5px/59px 'Liberation Sans', sans-serif;letter-spacing:0.000px;color:#000;">4</div>
<div class="t" style="left:256.47px;top:1147.03px;font:45.5px/59px 'Liberation Sans', sans-serif;letter-spacing:-0.560px;color:#000;white-space:nowrap;">Production</div>
<div class="a" style="left:73.8px;top:1213.7px;width:172.10px;height:61.80px;background:#d9d9d9;"></div>
<div class="a" style="left:248px;top:1213.7px;width:426.00px;height:61.80px;background:#d9d9d9;"></div>
<div class="a" style="left:34.8px;top:1275.1000000000001px;width:34.00px;height:1.80px;background:#c6c6c6;"></div>
<div class="t" style="left:38.95px;top:1211.03px;font:45.5px/59px 'Liberation Sans', sans-serif;letter-spacing:0.000px;color:#fff;">7</div>
<div class="t" style="left:210.65px;top:1211.03px;font:45.5px/59px 'Liberation Sans', sans-serif;letter-spacing:0.000px;color:#000;">6</div>
<div class="t" style="left:256.94px;top:1211.03px;font:45.5px/59px 'Liberation Sans', sans-serif;letter-spacing:-0.814px;color:#000;white-space:nowrap;">Quality Management</div>
<div class="a" style="left:73.8px;top:1277.7px;width:172.10px;height:61.80px;background:#d9d9d9;"></div>
<div class="a" style="left:248px;top:1277.7px;width:426.00px;height:61.80px;background:#d9d9d9;"></div>
<div class="a" style="left:34.8px;top:1339.1000000000001px;width:34.00px;height:1.80px;background:#c6c6c6;"></div>
<div class="t" style="left:38.95px;top:1275.03px;font:45.5px/59px 'Liberation Sans', sans-serif;letter-spacing:0.000px;color:#fff;">8</div>
<div class="t" style="left:210.65px;top:1275.03px;font:45.5px/59px 'Liberation Sans', sans-serif;letter-spacing:0.000px;color:#000;">8</div>
<div class="t" style="left:256.47px;top:1275.03px;font:45.5px/59px 'Liberation Sans', sans-serif;letter-spacing:-0.706px;color:#000;white-space:nowrap;">Research</div>
<div class="a" style="left:73.8px;top:1341.7px;width:172.10px;height:61.80px;background:#d9d9d9;"></div>
<div class="a" style="left:248px;top:1341.7px;width:426.00px;height:61.80px;background:#d9d9d9;"></div>
<div class="a" style="left:34.8px;top:1403.1000000000001px;width:34.00px;height:1.80px;background:#c6c6c6;"></div>
<div class="t" style="left:38.95px;top:1339.03px;font:45.5px/59px 'Liberation Sans', sans-serif;letter-spacing:0.000px;color:#fff;">9</div>
<div class="t" style="left:210.65px;top:1339.03px;font:45.5px/59px 'Liberation Sans', sans-serif;letter-spacing:0.000px;color:#000;">7</div>
<div class="t" style="left:257.43px;top:1339.03px;font:45.5px/59px 'Liberation Sans', sans-serif;letter-spacing:-0.677px;color:#000;white-space:nowrap;">Sales</div>
<div class="a" style="left:73.8px;top:1403.5px;width:600.20px;height:2.20px;background:#1e1e1e;"></div>
<div class="a" style="left:1279.100px;top:1554.600px;width:11.800px;height:11.800px;border-radius:50%;background:#555"></div>
<div class="a" style="left:30px;top:1568.3px;width:2509.00px;height:452.70px;background:#000;"></div>
<div class="a" style="left:31.3px;top:1569.6px;width:2506.40px;height:450.20px;background:#1e1e1e;"></div>
<div class="t" style="left:39.38px;top:1575.80px;font:46.5px/60px 'DejaVu Sans Mono', 'Liberation Mono', monospace;letter-spacing:-1.635px;color:#fff;white-space:pre;-webkit-text-stroke:.3px;">Execution finished without errors.</div>
<div class="t" style="left:39.38px;top:1635.95px;font:46.5px/60px 'DejaVu Sans Mono', 'Liberation Mono', monospace;letter-spacing:-1.635px;color:#fff;white-space:pre;-webkit-text-stroke:.3px;">Result: 9 rows returned in 9ms</div>
<div class="t" style="left:39.38px;top:1696.10px;font:46.5px/60px 'DejaVu Sans Mono', 'Liberation Mono', monospace;letter-spacing:-1.635px;color:#fff;white-space:pre;-webkit-text-stroke:.3px;">At line 1:</div>
<div class="t" style="left:39.38px;top:1756.25px;font:46.5px/60px 'DejaVu Sans Mono', 'Liberation Mono', monospace;letter-spacing:-1.635px;color:#fff;white-space:pre;-webkit-text-stroke:.3px;">-- Get a list of all departments, in alphabetical order</div>
<div class="t" style="left:39.38px;top:1816.40px;font:46.5px/60px 'DejaVu Sans Mono', 'Liberation Mono', monospace;letter-spacing:-1.635px;color:#fff;white-space:pre;-webkit-text-stroke:.3px;">SELECT *</div>
<div class="t" style="left:39.38px;top:1876.55px;font:46.5px/60px 'DejaVu Sans Mono', 'Liberation Mono', monospace;letter-spacing:-1.635px;color:#fff;white-space:pre;-webkit-text-stroke:.3px;">FROM departments</div>
<div class="t" style="left:39.38px;top:1936.70px;font:46.5px/60px 'DejaVu Sans Mono', 'Liberation Mono', monospace;letter-spacing:-1.635px;color:#fff;white-space:pre;-webkit-text-stroke:.3px;">ORDER BY dept<span style="position:relative;top:-9px">_</span>name ASC</div>
<div class="a" style="left:0px;top:2051.5px;width:2570.00px;height:58.50px;background:#2f2f2f;"></div>
<div class="a" style="left:0px;top:2051.5px;width:2570.00px;height:1.30px;background:#5a5a5a;"></div>
<div class="t" style="left:2462.84px;top:2065.29px;font:28px/36px 'Liberation Sans', sans-serif;letter-spacing:1.388px;color:#757575;">UTF-8</div>
</div>
</body></html>
